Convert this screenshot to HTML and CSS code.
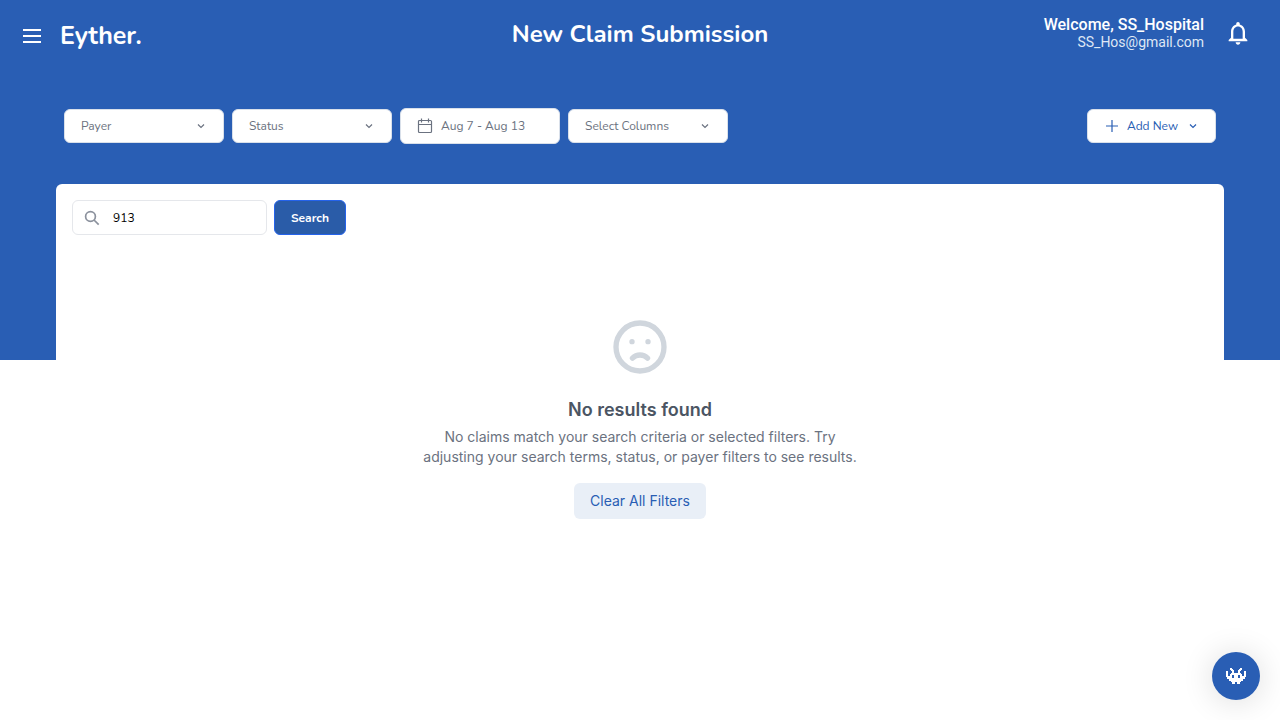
FILE: index.html
```html
<!DOCTYPE html>
<html lang="en">
<head>
<meta charset="utf-8">
<meta name="viewport" content="width=device-width, initial-scale=1">
<title>New Claim Submission</title>
<link rel="stylesheet" href="styles.css">
</head>
<body>
<div class="page">
  <header class="topbar">
    <div class="brand">
      <button class="icon-button" type="button" aria-label="Menu">
        <svg width="24" height="24" viewBox="0 0 24 24" fill="currentColor"><path d="M3 5h18v2H3zM3 11h18v2H3zM3 17h18v2H3z"/></svg>
      </button>
      <span class="logo">Eyther.</span>
    </div>
    <h1 class="title">New Claim Submission</h1>
    <div class="account">
      <div class="user">
        <div class="welcome">Welcome, SS_Hospital</div>
        <div class="email">SS_Hos@gmail.com</div>
      </div>
      <button class="icon-button" type="button" aria-label="Notifications">
        <svg width="28" height="28" viewBox="0 0 24 24" fill="currentColor"><path d="M12 22c1.1 0 2-.9 2-2h-4c0 1.100.9 2 2 2zm6-6v-5c0-3.070-1.630-5.640-4.500-6.320V4c0-.83-.67-1.500-1.500-1.500s-1.500.67-1.500 1.500v.68C7.640 5.360 6 7.920 6 11v5l-2 2v1h16v-1l-2-2zm-2 1H8v-6c0-2.480 1.510-4.500 4-4.500s4 2.020 4 4.500v6z"/></svg>
      </button>
    </div>
  </header>

  <div class="filters">
    <label class="dropdown">
      <select class="field" aria-label="Payer"><option>Payer</option></select>
      <svg class="chevron" width="14" height="14" viewBox="0 0 14 14"><path d="m4 5.500 3 3 3-3"/></svg>
    </label>
    <label class="dropdown">
      <select class="field" aria-label="Status"><option>Status</option></select>
      <svg class="chevron" width="14" height="14" viewBox="0 0 14 14"><path d="m4 5.500 3 3 3-3"/></svg>
    </label>
    <button class="field dates" type="button">
      <svg class="line-icon" width="16" height="16" viewBox="0 0 16 16"><path d="M2.500 2.500h11a1 1 0 0 1 1 1v10a1 1 0 0 1-1 1h-11a1 1 0 0 1-1-1v-10a1 1 0 0 1 1-1zM1.500 6.500h13M4.500.5v4M11.500.5v4"/></svg>
      Aug 7 - Aug 13
    </button>
    <label class="dropdown">
      <select class="field" aria-label="Select Columns"><option>Select Columns</option></select>
      <svg class="chevron" width="14" height="14" viewBox="0 0 14 14"><path d="m4 5.500 3 3 3-3"/></svg>
    </label>
    <button class="field add" type="button">
      <svg class="line-icon" width="14" height="14" viewBox="0 0 14 14"><path d="M8 1v12M2 7h12"/></svg>
      Add New
      <svg class="line-icon" width="12" height="12" viewBox="0 0 12 12"><path d="m3 4.500 3 3 3-3"/></svg>
    </button>
  </div>

  <main class="panel">
    <form class="search">
      <label class="search-box">
        <svg width="18" height="18" viewBox="0 0 18 18" fill="none" stroke="currentColor" stroke-width="1.700"><circle cx="7.500" cy="7.500" r="4.900"/><path d="m11 11 4.700 4.700"/></svg>
        <input class="search-input" type="text" value="913" aria-label="Search claims">
      </label>
      <button class="search-button" type="button">Search</button>
    </form>
    <section class="empty">
      <svg class="face" width="64" height="64" viewBox="0 0 24 24"><circle cx="12" cy="12" r="9"/><path d="M9.170 16.170a4 4 0 0 1 5.660 0M9 10h.01M15 10h.01"/></svg>
      <h2 class="empty-title">No results found</h2>
      <p class="empty-text">No claims match your search criteria or selected filters. Try adjusting your search terms, status, or payer filters to see results.</p>
      <button class="clear" type="button">Clear All Filters</button>
    </section>
  </main>
</div>
<button class="chat" type="button" aria-label="Open assistant">
  <svg width="20" height="16" viewBox="0 0 20 16" fill="currentColor"><path fill-rule="evenodd" d="M4 0h2v1h1v1h1v3h4V2h1V1h1V0h2v2h-1v1h-1v2h1v1h1v2h2V3h2v6h-1v2h-2v2h-2v1h-1v2h-3v-2H9v2H6v-2H5v-1H3v-2H1V9H0V3h2v5h2V6h1V5h1V3H5V2H4zM6 7v3h2V7zM12 7v3h2V7z"/></svg>
</button>
</body>
</html>
```

FILE: styles.css
```css
* { box-sizing: border-box; }

body {
  margin: 0;
  background: #fff;
  font-family: Nunito, "Noto Sans", sans-serif;
}

button, input, select { font: inherit; margin: 0; }
button { cursor: pointer; }
svg { display: block; flex: none; }
h1, h2, p { margin: 0; }

.page {
  min-height: 100vh;
  background: linear-gradient(#295eb4, #295eb4) top / 100% 50vh no-repeat;
}

.topbar {
  display: grid;
  grid-template-columns: 1fr auto 1fr;
  padding: 12px 20px 0;
  height: 68px;
  color: #fff;
}

.brand {
  display: flex;
  align-items: center;
  gap: 16px;
  height: 48px;
}

.icon-button {
  border: 0;
  padding: 0;
  background: none;
  color: #fff;
}

.logo {
  font-size: 25px;
  font-weight: 700;
  line-height: 32px;
}

.title {
  font-size: 24px;
  font-weight: 700;
  line-height: 44px;
}

.account {
  display: flex;
  justify-content: flex-end;
  gap: 20px;
  padding: 3px 8px 0 0;
  font-family: Roboto, sans-serif;
  text-align: right;
}

.account .icon-button { height: 36px; }
.welcome { font-size: 16px; font-weight: 500; line-height: 19px; }
.email { font-size: 14px; line-height: 16px; color: #dfe7f4; }

.filters {
  display: flex;
  align-items: center;
  gap: 8px;
  padding: 40px 64px;
}

.dropdown { position: relative; width: 160px; }

.field {
  width: 160px;
  height: 34px;
  padding: 0 16px;
  border: 1px solid #d9e0ea;
  border-radius: 6px;
  background: #fff;
  color: #6b7280;
  font-size: 12px;
  display: flex;
  align-items: center;
  appearance: none;
}

.chevron {
  position: absolute;
  right: 16px;
  top: 10px;
  pointer-events: none;
}

.chevron, .line-icon {
  fill: none;
  stroke: currentColor;
  stroke-width: 1.2;
}

.chevron { color: #6b7280; }

.dates { height: 36px; gap: 8px; }

.add {
  width: auto;
  margin-left: auto;
  gap: 9px;
  color: #295eb4;
}

.panel {
  margin: 0 56px;
  padding: 16px;
  min-height: 536px;
  border-radius: 6px 6px 0 0;
  background: #fff;
}

.search { display: flex; gap: 7px; }

.search-box {
  display: flex;
  align-items: center;
  gap: 12px;
  width: 195px;
  height: 35px;
  padding: 0 10px;
  border: 1px solid #e5e7eb;
  border-radius: 6px;
  color: #8b919d;
}

.search-input {
  flex: 1;
  min-width: 0;
  padding: 0;
  border: 0;
  outline: 0;
  color: #000;
  font-size: 12px;
}

.search-button {
  width: 72px;
  height: 35px;
  padding: 0;
  border: 1px solid #2563eb;
  border-radius: 6px;
  background: #2a5ca8;
  color: #fff;
  font-size: 12px;
  font-weight: 700;
}

.empty {
  display: flex;
  flex-direction: column;
  align-items: center;
  padding-top: 80px;
  font-family: Inter, sans-serif;
  text-align: center;
}

.face {
  fill: none;
  stroke: #d0d6dd;
  stroke-width: 2;
  stroke-linecap: round;
}

.empty-title {
  margin-top: 17px;
  font-size: 18px;
  font-weight: 600;
  line-height: 28px;
  color: #4b5563;
}

.empty-text {
  max-width: 448px;
  margin-top: 3px;
  font-size: 14px;
  line-height: 20px;
  color: #6b7280;
}

.clear {
  height: 36px;
  margin-top: 16px;
  padding: 0 16px 2px;
  border: 0;
  border-radius: 6px;
  background: #e9eff7;
  color: #295eb4;
  font-size: 14px;
}

.chat {
  position: fixed;
  right: 20px;
  bottom: 20px;
  display: flex;
  align-items: center;
  justify-content: center;
  width: 48px;
  height: 48px;
  padding: 0;
  border: 0;
  border-radius: 50%;
  background: #295eb4;
  color: #fff;
  box-shadow: 0 2px 32px rgba(0, 0, 0, 0.14);
}
```
